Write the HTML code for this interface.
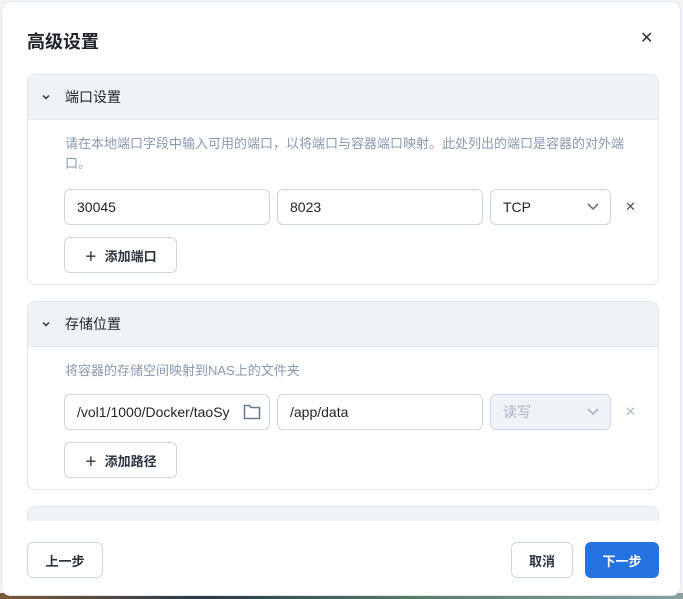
<!DOCTYPE html><html><head><meta charset="utf-8"><style>
*{box-sizing:border-box;margin:0;padding:0}
body{width:683px;height:599px;background:#f3f4f6;font-family:"Liberation Sans","Noto Sans CJK SC",sans-serif;position:relative;overflow:hidden}
.strip{position:absolute;left:0;right:0;bottom:0;height:6px;background:linear-gradient(90deg,#7a5a3a,#2a3a4a 30%,#5a7a6a 60%,#8aa0a0)}
.dlg{position:absolute;left:1px;top:1px;width:680px;height:595px;background:#fff;border-radius:10px;border:1px solid #e3e7ee}
.abs{position:absolute}
.title{left:25px;top:26px;font-size:18px;font-weight:bold;color:#1f2329}
.close{left:638px;top:26px;font-size:16px;color:#333}
.sec{position:absolute;left:25px;width:632px;border:1px solid #e3e8ef;border-radius:8px;overflow:hidden}
.hd{height:45px;background:#eff3f8;border-bottom:1px solid #e3e8ef;display:flex;align-items:center;font-size:14px;color:#1f2329}
.hd svg{margin:0 14px 0 13px}
.desc{position:absolute;left:37px;font-size:13px;color:#8a9ab0;line-height:20px;width:575px}
.in{position:absolute;height:36px;border:1px solid #cfd7e2;border-radius:6px;font-size:14px;color:#1f2329;padding-left:12px;line-height:34px;background:#fff}
.btn{position:absolute;height:36px;border:1px solid #cfd7e2;border-radius:6px;font-size:13px;font-weight:bold;color:#2c3440;display:flex;align-items:center;justify-content:center;background:#fff}
.x{position:absolute;font-size:13px;color:#555}
</style></head><body><div class="strip"></div>
<div class="dlg">
<div class="abs title">高级设置</div>
<div class="abs close">✕</div>
<div class="sec" style="top:72px;height:211px">
<div class="hd"><svg width="10" height="8" viewBox="0 0 10 8"><path d="M2 2.5L5 5.5 8 2.5" stroke="#333" stroke-width="1.5" fill="none"/></svg>端口设置</div>
<div class="desc" style="top:59px">请在本地端口字段中输入可用的端口，以将端口与容器端口映射。此处列出的端口是容器的对外端口。</div>
<div class="in" style="left:36px;top:114px;width:206px">30045</div>
<div class="in" style="left:249px;top:114px;width:206px">8023</div>
<div class="in" style="left:462px;top:114px;width:121px">TCP<svg class="abs" style="right:10px;top:12px" width="14" height="10" viewBox="0 0 14 10"><path d="M2 2l5 5 5-5" stroke="#6b7a90" stroke-width="1.6" fill="none"/></svg></div>
<div class="x" style="left:597px;top:124px">✕</div>
<div class="btn" style="left:36px;top:162px;width:113px">＋&nbsp;&nbsp;添加端口</div>
</div>
<div class="sec" style="top:299px;height:189px">
<div class="hd"><svg width="10" height="8" viewBox="0 0 10 8"><path d="M2 2.5L5 5.5 8 2.5" stroke="#333" stroke-width="1.5" fill="none"/></svg>存储位置</div>
<div class="desc" style="top:59px">将容器的存储空间映射到NAS上的文件夹</div>
<div class="in" style="left:36px;top:92px;width:206px">/vol1/1000/Docker/taoSy<svg class="abs" style="right:8px;top:9px" width="18" height="16" viewBox="0 0 18 16"><path d="M1.5 1.5h5l1.5 2h8.5v11h-15z" stroke="#6b7a90" stroke-width="1.6" fill="none"/></svg></div>
<div class="in" style="left:249px;top:92px;width:206px">/app/data</div>
<div class="in" style="left:462px;top:92px;width:121px;background:#eff3f8;color:#a8b4c4">读写<svg class="abs" style="right:10px;top:12px" width="14" height="10" viewBox="0 0 14 10"><path d="M2 2l5 5 5-5" stroke="#a8b4c4" stroke-width="1.6" fill="none"/></svg></div>
<div class="x" style="left:597px;top:102px;color:#b0bac8">✕</div>
<div class="btn" style="left:36px;top:140px;width:113px">＋&nbsp;&nbsp;添加路径</div>
</div>
<div class="sec" style="top:504px;height:15px;background:#eff3f8;border-bottom:none;border-radius:8px 8px 0 0"></div>
<div class="btn" style="left:25px;top:540px;width:76px">上一步</div>
<div class="btn" style="left:509px;top:540px;width:62px">取消</div>
<div class="btn" style="left:583px;top:540px;width:74px;background:#2473e0;border-color:#2473e0;color:#fff">下一步</div>
</div>
</body></html>
